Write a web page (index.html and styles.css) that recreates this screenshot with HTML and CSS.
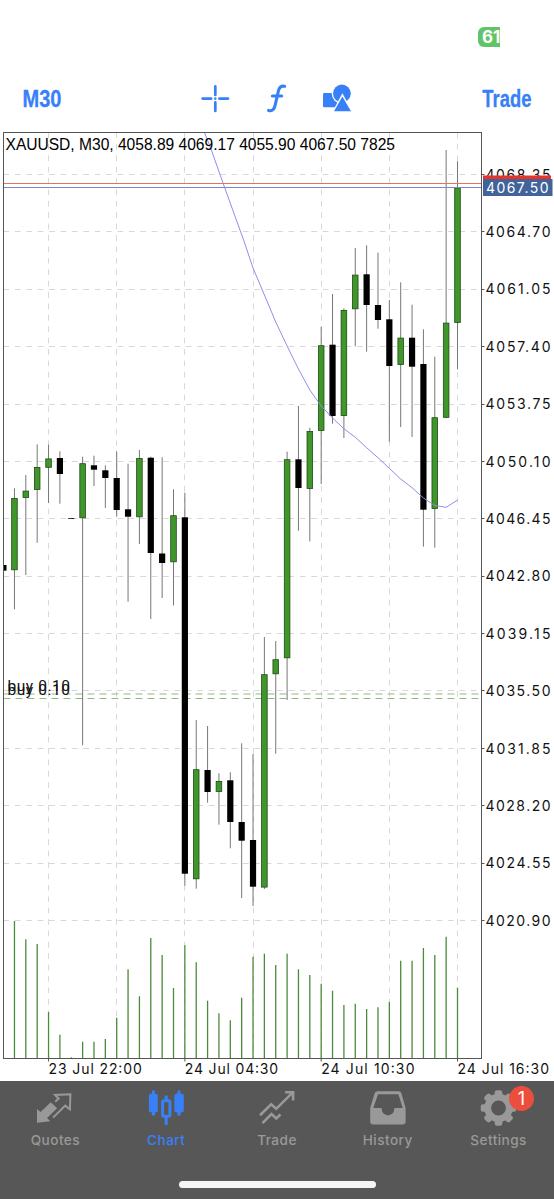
FILE: index.html
```html
<!DOCTYPE html>
<html lang="en">
<head>
  <meta charset="UTF-8">
  <meta name="viewport" content="width=device-width, initial-scale=1.0">
  <title>XAUUSD, M30</title>
  <link rel="stylesheet" href="styles.css">
</head>
<body>
  <div class="status-bar">
    <div class="battery">61</div>
  </div>

  <header class="toolbar">
    <a class="tool-text timeframe">M30</a>
    <div class="tools">
      <svg width="30" height="30" viewBox="0 0 30 30" fill="none" stroke="#3880f7" stroke-width="2.7" stroke-linecap="round">
        <path d="M15.3 2.3v8.6M15.3 18.3v8.6M2.6 14.6h8.6M19.4 14.6h8.6"/>
        <circle cx="15.3" cy="14.6" r="1.3" fill="#3880f7" stroke="none"/>
      </svg>
      <svg width="22" height="30" viewBox="0 0 22 30" fill="none" stroke="#3880f7" stroke-width="3.1" stroke-linecap="round">
        <path d="M18.6 2.3C15 1.5 13.2 3.4 12.4 7L9.2 20.8C8.2 25.4 6.5 27.5 2.6 26.4M6.4 12h9.3"/>
      </svg>
      <svg width="30" height="30" viewBox="0 0 30 30" fill="#3880f7">
        <rect x="0" y="9" width="14" height="14.3" rx="1.4"/>
        <circle cx="18.9" cy="9.5" r="10.2" fill="#fff"/>
        <circle cx="18.9" cy="9.5" r="8.9"/>
        <path d="M19.4 9.3L8.9 28.8h21.2z" fill="#fff"/>
        <path d="M19.4 12.4L11 27.3h17z"/>
      </svg>
    </div>
    <a class="tool-text trade">Trade</a>
  </header>

  <svg class="chart" id="chart" width="554" height="949" viewBox="0 132 554 949"></svg>

  <nav class="tab-bar">
    <div class="tabs">
      <a class="tab">
        <svg width="38" height="38" viewBox="0 0 38 38">
          <path d="M1 19L4.6 22L14.8 12.3L21.2 18.3L11 28L14.3 31.2L1 32.8z" fill="#999"/>
          <path d="M19.2 11.8L22.6 8.6L19 5L34.4 4.2L33.9 19.3L29.2 15.6L17 27.6" fill="none" stroke="#999" stroke-width="2"/>
        </svg>
        <span>Quotes</span>
      </a>
      <a class="tab active">
        <svg width="38" height="38" viewBox="0 0 38 38" fill="#3880f7">
          <path d="M5 0.5h2.8v3.2h1.2q1.8 0 1.8 1.8v15q0 1.8-1.8 1.8h-.8v3.3H4.8v-3.3H3.7q-1.8 0-1.8-1.8v-15q0-1.8 1.8-1.8h1.3z"/>
          <path d="M30.6 0.5h2.8v3.2h1.6q1.8 0 1.8 1.8v15q0 1.8-1.8 1.8h-1.2v3.3h-3.4v-3.3h-1.2q-1.8 0-1.8-1.8v-15q0-1.8 1.8-1.8h1.4z"/>
          <path d="M19.2 5.5v5M19.2 27v8" stroke="#3880f7" stroke-width="3"/>
          <rect x="15.6" y="10.7" width="7.3" height="15.6" rx="1" fill="none" stroke="#3880f7" stroke-width="3"/>
        </svg>
        <span>Chart</span>
      </a>
      <a class="tab">
        <svg width="38" height="38" viewBox="0 0 38 38" fill="none" stroke="#999" stroke-width="2.6">
          <path d="M2 25.2L13.2 14.2L18.2 18.8L34.3 2.8M27.1 2.3h8v8.2"/>
          <path d="M4.5 33.2L13.5 24L18.3 28.5L22.5 24.3"/>
        </svg>
        <span>Trade</span>
      </a>
      <a class="tab">
        <svg width="38" height="38" viewBox="0 0 38 38">
          <path fill="#999" fill-rule="evenodd" d="M8.7 1.3h20.9q2.2 0 2.8 2l4.2 14.7v13.4q0 3-3 3H4.2q-3 0-3-3V18L5.7 3.3q.7-2 3-2zM9 4.2L4.3 18h7.4q1.1 0 1.1 1.2a6.2 6.2 0 0 0 12.4 0q0-1.2 1.1-1.2h7.4L29.4 4.2z"/>
        </svg>
        <span>History</span>
      </a>
      <a class="tab">
        <svg width="38" height="38" viewBox="0 0 38 38">
          <g id="gear" fill="#999"></g>
          <circle cx="18.5" cy="18" r="10.8" fill="none" stroke="#999" stroke-width="6.8"/>
        </svg>
        <b class="badge">1</b>
        <span>Settings</span>
      </a>
    </div>
    <div class="home-indicator"></div>
  </nav>

  <script src="chart.js"></script>
</body>
</html>
```
FILE: styles.css
```css
body {
  font-family: Inter, Roboto, sans-serif;
  background-color: #fff;
  color: #000;
  margin: 0;
  width: 554px;
  height: 1199px;
  overflow: hidden;
  display: flex;
  flex-direction: column;
}

.status-bar {
  height: 66px;
  flex: none;
  display: flex;
  justify-content: flex-end;
  padding-right: 54px;
}

.battery {
  box-sizing: border-box;
  width: 22px;
  height: 20px;
  margin-top: 27px;
  padding-left: 4px;
  overflow: hidden;
  background-color: #61c466;
  border-radius: 6px 0 0 6px;
  color: #fff;
  font-size: 17px;
  font-weight: bold;
  line-height: 20px;
}

.toolbar {
  height: 66px;
  flex: none;
  display: grid;
  grid-template-columns: 200px 154px 200px;
  align-items: center;
  color: #3880f7;
}

.tool-text {
  font-family: "Liberation Sans", Arial, sans-serif;
  font-size: 23px;
  font-weight: bold;
  -webkit-text-stroke: 0.3px #3880f7;
}

.timeframe {
  padding-left: 22px;
  transform: scaleX(0.87);
  transform-origin: 26px 50%;
}

.trade {
  justify-self: end;
  padding-right: 23px;
  transform: scaleX(0.8);
  transform-origin: calc(100% - 23px) 50%;
}

.tools {
  display: flex;
  justify-content: space-between;
  width: 153px;
}

.chart {
  display: block;
  flex: none;
}

.frame { fill: none; stroke: #555; stroke-width: 1; }
.grid { stroke: #d8d8d8; stroke-width: 1; stroke-dasharray: 5.7 5.7; }
.order { stroke: #8fb988; stroke-width: 1.2; stroke-dasharray: 7 5; }
.volume { stroke: #4c8a3b; stroke-width: 1.3; }
.wick { stroke: #777; stroke-width: 1; }
.up { fill: #40962b; stroke: #1d4b14; stroke-width: 0.8; }
.down { fill: #000; }
.average { fill: none; stroke: #8f8fe8; stroke-width: 1; }
.ask { stroke: #e8705f; stroke-width: 1.2; }
.bid { stroke: #7b88cc; stroke-width: 1.2; }

.axis {
  font-family: Inter, sans-serif;
  font-size: 14px;
  fill: #111;
}

.axis-bid { fill: #fff; }

.symbol {
  font-family: "Liberation Sans", Arial, sans-serif;
  font-size: 15.6px;
}

.order-label {
  font-family: Roboto, sans-serif;
  font-size: 15.5px;
  fill: #111;
}

.tab-bar {
  flex: 1;
  background-color: #575757;
  display: flex;
  flex-direction: column;
  align-items: center;
}

.tabs {
  width: 554px;
  height: 99px;
  display: grid;
  grid-template-columns: repeat(5, 1fr);
}

.tab {
  position: relative;
  display: flex;
  flex-direction: column;
  align-items: center;
  padding-top: 9px;
  color: #999;
  font-size: 13.6px;
  font-weight: 500;
  letter-spacing: 0.45px;
}

.tab span {
  margin-top: 4px;
  line-height: 16px;
}

.active {
  color: #3880f7;
}

.badge {
  position: absolute;
  top: 5px;
  left: 66px;
  width: 25px;
  height: 25px;
  border-radius: 50%;
  background-color: #eb4e3d;
  color: #fff;
  font-size: 18px;
  font-weight: normal;
  line-height: 25px;
  text-align: center;
}

.home-indicator {
  width: 197px;
  height: 7px;
  margin-top: 1px;
  border-radius: 4px;
  background-color: #f4f4f4;
}
```
FILE: chart.js
```js
const chart = document.getElementById('chart');
const LEFT = 3.5, RIGHT = 481.5, TOP = 132.5, BOTTOM = 1058.5;
const STEP = 11.36;
const x = i => 3.1 + i * STEP;

// open/close body top and bottom, wick high and low, direction, volume top
const candles = [
  [565, 570.7, 565, 570.7, 'd', 0],
  [498, 570, 488.3, 609.3, 'u', 921],
  [490.7, 497.7, 475, 575, 'u', 939.3],
  [467, 489.7, 444.3, 542.7, 'u', 944],
  [458.5, 467.5, 444.7, 503, 'u', 1012],
  [458, 474, 451.3, 503.7, 'd', 1034.7],
  [518, 518.8, 518, 518.8, 'd', 1057.3],
  [463.3, 518, 456.7, 745.3, 'u', 1041.7],
  [465.3, 469.7, 455.7, 486, 'd', 1041.7],
  [470.3, 478, 465.3, 508, 'd', 1039],
  [478, 510, 451.3, 516.7, 'd', 1017.7],
  [509.3, 516.7, 463.7, 601.7, 'd', 969.3],
  [458, 517, 450, 544, 'u', 996.3],
  [457.7, 553, 456.7, 619, 'd', 938],
  [553.5, 563, 457.3, 598, 'd', 955],
  [515.3, 562, 489.3, 605.3, 'u', 988],
  [517.3, 873.7, 492.7, 885.7, 'd', 945.3],
  [769.3, 879, 720, 888.7, 'u', 962.3],
  [770, 792, 726, 802.7, 'd', 1000.7],
  [781, 791.7, 773.3, 824.7, 'u', 1013.3],
  [780.3, 822, 772.3, 848.3, 'd', 1020.3],
  [822, 840.7, 743.3, 898, 'd', 997.7],
  [840, 886.7, 754, 906, 'd', 956.7],
  [674.3, 887.3, 637, 889, 'u', 953.7],
  [659.3, 674, 641, 753.7, 'u', 965],
  [459.3, 658, 451.7, 700, 'u', 953.7],
  [459.3, 488, 406, 530.7, 'd', 969.3],
  [431, 488.7, 427.7, 541.3, 'u', 975],
  [345.3, 430.7, 326.7, 484, 'u', 983.7],
  [344.7, 416, 294, 423.7, 'd', 990.7],
  [310, 415.7, 308.3, 438, 'u', 1005],
  [274.7, 309, 248, 346.3, 'u', 1003.7],
  [274.3, 305, 245.3, 351.7, 'd', 1009],
  [305, 320, 252.7, 328.7, 'd', 1007.3],
  [319.3, 366, 300, 441.7, 'd', 1002],
  [337.7, 364.7, 282.3, 427, 'u', 960.7],
  [337.7, 366.7, 304.7, 437, 'd', 960.7],
  [364, 509.7, 329.3, 546.7, 'd', 948],
  [417.3, 508.7, 356.7, 547.7, 'u', 955],
  [322.7, 417.5, 150, 418.3, 'u', 936.7],
  [187.5, 322.7, 161.3, 369.3, 'u', 987.7]
];

const average = [[204.5, 132.5], [211, 149], [223, 183], [243.6, 240], [x(22), 268], [260, 284.5],
  [x(24), 322], [x(25), 346], [x(26), 369], [x(27), 390], [x(28), 406], [x(29), 418], [x(30), 428.7],
  [x(31), 437.3], [x(32), 447.7], [x(33), 457.7], [x(34), 468.3], [x(35), 479], [x(36), 487.7],
  [x(37), 498], [x(38), 505.5], [x(39), 507.3], [x(40), 500]];

const line = (cls, x1, y1, x2, y2) => `<line class="${cls}" x1="${x1}" y1="${y1}" x2="${x2}" y2="${y2}"/>`;
const text = (cls, tx, ty, width, str) =>
  `<text class="${cls}" x="${tx}" y="${ty}" textLength="${width}">${str}</text>`;

let out = '';

// grid and price axis
for (let i = 0; i < 14; i++) {
  const y = 174.5 + i * 57.385;
  out += line('grid', LEFT, Math.floor(y) + 0.5, RIGHT, Math.floor(y) + 0.5);
  out += line('frame', RIGHT, Math.floor(y) + 0.5, RIGHT + 3, Math.floor(y) + 0.5);
  out += text('axis', 485.5, y + 5.2, 65, (4068.35 - i * 3.65).toFixed(2));
}
for (let i = 4; i <= 40; i += 6) {
  out += line('grid', Math.floor(x(i)) + 0.5, TOP, Math.floor(x(i)) + 0.5, BOTTOM);
}

// time axis
['23 Jul 22:00', '24 Jul 04:30', '24 Jul 10:30', '24 Jul 16:30'].forEach((label, i) => {
  const tx = x(4 + i * 12);
  out += line('frame', tx, BOTTOM, tx, BOTTOM + 3);
  out += text('axis', tx, 1073.7, i === 3 ? 91.5 : 93.3, label);
});

// open orders
[694, 698.5].forEach(y => out += line('order', LEFT, y, RIGHT, y));

candles.forEach(([top, bottom, high, low, dir, vol], i) => {
  if (vol) out += line('volume', x(i), vol, x(i), BOTTOM);
  if (high < top || low > bottom) out += line('wick', x(i), high, x(i), low);
  const left = i ? x(i) - 3.1 : LEFT;
  const width = i ? 6.2 : 3;
  out += dir === 'u'
    ? `<rect class="up" x="${left + 0.3}" y="${top + 0.4}" width="${width - 0.6}" height="${bottom - top - 0.6}"/>`
    : `<rect class="down" x="${left}" y="${top}" width="${width}" height="${bottom - top}"/>`;
});

out += `<polyline class="average" points="${average.map(p => p.join()).join(' ')}"/>`;
out += line('ask', LEFT, 183.5, RIGHT, 183.5) + line('bid', LEFT, 187.5, RIGHT, 187.5);
out += `<rect class="frame" x="${LEFT}" y="${TOP}" width="${RIGHT - LEFT}" height="${BOTTOM - TOP}"/>`;

// ask and bid tags
out += '<rect x="483" y="175.5" width="68" height="12" fill="#e8332a"/>';
out += '<rect x="483" y="179" width="69.5" height="17" fill="#41639a"/>';
out += text('axis axis-bid', 486, 192.6, 62.5, '4067.50');

out += text('symbol', 5.5, 150, 389.5, 'XAUUSD, M30, 4058.89 4069.17 4055.90 4067.50 7825');
out += text('order-label', 7.5, 691, 62.5, 'buy 0.10') + text('order-label', 7.5, 695.3, 62.5, 'buy 0.10');

chart.innerHTML = out;

// gear teeth
let teeth = '';
for (let i = 0; i < 8; i++) {
  teeth += `<rect x="14.7" y="0.2" width="7.6" height="7" rx="2.2" transform="rotate(${i * 45} 18.5 18)"/>`;
}
document.getElementById('gear').innerHTML = teeth;
```
